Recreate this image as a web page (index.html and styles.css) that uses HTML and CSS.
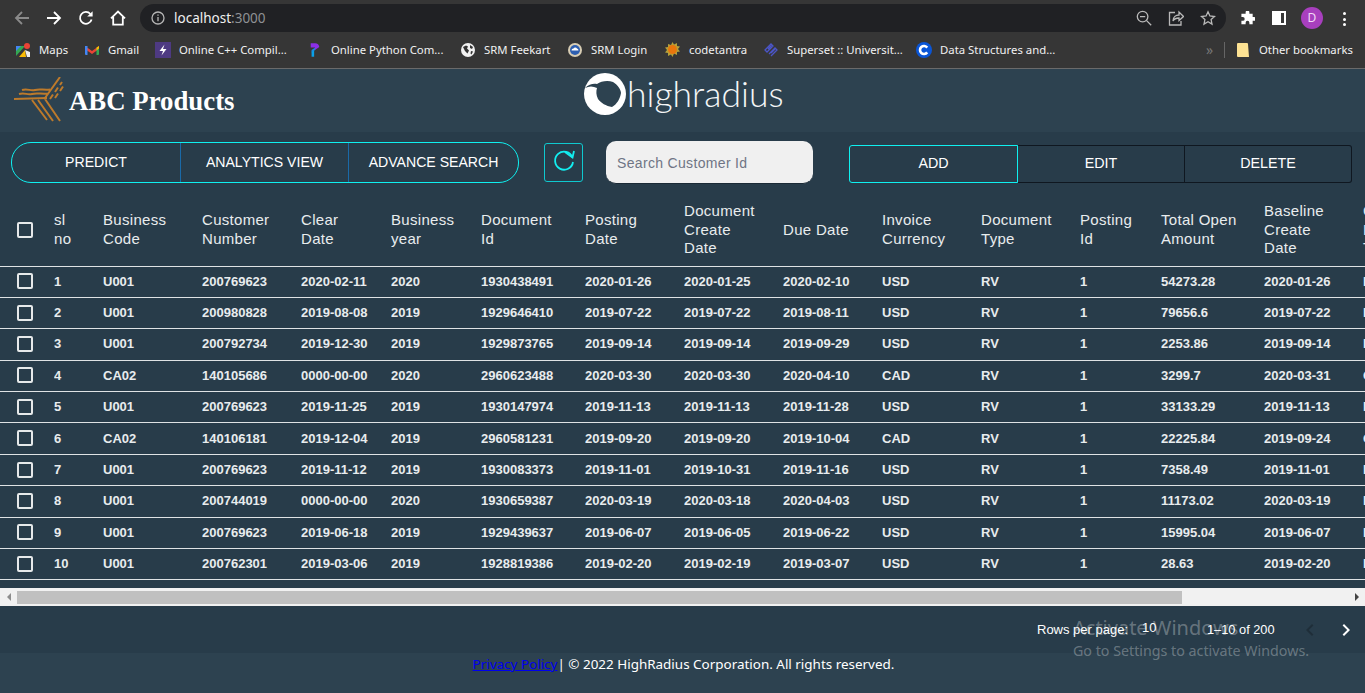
FILE: index.html
```html
<!DOCTYPE html>
<html lang="en">
<head>
<meta charset="utf-8">
<title>ABC Products</title>
<link rel="stylesheet" href="styles.css">
</head>
<body>
<div class="browser">
  <div class="nav-row">
    <svg class="nav-icon dim" viewBox="0 0 16 16"><path d="M15 8H2M8 2 2 8l6 6"/></svg>
    <svg class="nav-icon" viewBox="0 0 16 16"><path d="M1 8h13M8 2l6 6-6 6"/></svg>
    <svg class="nav-icon" viewBox="0 0 16 16"><path d="M13.6 9.5A5.9 5.9 0 1 1 12.4 4"/><path class="solid" d="M14.6 1.2v5.4H9.2z"/></svg>
    <svg class="nav-icon" viewBox="0 0 16 16"><path d="M1 8.4 8 1.6l7 6.8M3.2 7v7.6h9.6V7"/></svg>
    <div class="omnibox">
      <svg class="info" viewBox="0 0 14 14"><circle cx="7" cy="7" r="6"/><path d="M7 6v4.2M7 3.6v1.2"/></svg>
      <span class="url">localhost<span class="port">:3000</span></span>
      <svg class="omni-icon zoom-out" viewBox="0 0 16 16"><circle cx="6.6" cy="6.6" r="5.3"/><path d="M4 6.6h5.2M10.6 10.6l4.6 4.6"/></svg>
      <svg class="omni-icon" viewBox="0 0 16 16"><path d="M7 2.500H1.500V15h11.500v-4"/><path d="M5 11c0-4 3-6 6-6V2l4.500 4.500L11 10.500V8c-3 0-5 1-6 3z"/></svg>
      <svg class="omni-icon" viewBox="0 0 16 16"><path d="m8 1.800 1.900 4.200 4.600.5-3.400 3.100.9 4.500L8 11.800l-4 2.300.9-4.500L1.500 6.500l4.600-.5z"/></svg>
    </div>
    <svg class="ext" viewBox="0 0 16 16"><path d="M6 1.500a2 2 0 0 1 4 0V3h3.500v3.500H15a2 2 0 0 1 0 4h-1.500V14H10v-1.500a2 2 0 0 0-4 0V14H1.500v-3.500H3a2 2 0 0 0 0-4H1.500V3H6z"/></svg>
    <span class="sidepanel"></span>
    <span class="avatar">D</span>
    <span class="menu-dots"><i></i><i></i><i></i></span>
  </div>
  <div class="bookmarks">
    <a class="bm bm-maps"><svg viewBox="0 0 14 14"><path fill="#34a853" d="M0 3h9L0 13z"/><path fill="#fbbc04" d="M9 7 3 14h7z"/><path fill="#4285f4" d="M0 3h5L0 8z"/><path fill="#eee" d="M9 7 11 14h3V9z"/><circle cx="11" cy="3" r="3" fill="#ea4335"/></svg>Maps</a>
    <a class="bm bm-gmail"><svg viewBox="0 0 14 14"><path fill="#ea4335" d="M0 3l7 5 7-5v3L7 11 0 6z"/><path fill="#4285f4" d="M0 3h2.500v9H1a1 1 0 0 1-1-1z"/><path fill="#34a853" d="M11.500 5h2.500v6a1 1 0 0 1-1 1h-1.500z"/><path fill="#fbbc04" d="M11.500 4.500 14 3v2.500l-2.500 2z"/></svg>Gmail</a>
    <a class="bm bm-cpp"><svg viewBox="0 0 16 16"><rect width="16" height="16" fill="#4e3a82"/><path fill="#fff" d="M9.500 2.500 4.500 9H8l-1.500 4.500 5-6.500H8z"/></svg>Online C++ Compil...</a>
    <a class="bm bm-py"><svg viewBox="0 0 14 16"><path fill="#8b2fe8" d="M2 0h5a5 5 0 0 1 5 4.500L7 8V5H2z"/><path fill="#1e88e5" d="M3 8l4-2.500V8l-4 3z"/><path fill="#0aa0e8" d="M3 10l3-2v8H3z"/></svg>Online Python Com...</a>
    <a class="bm bm-feekart"><svg viewBox="0 0 14 14"><circle cx="7" cy="7" r="7" fill="#f1f1f1"/><path fill="#333" d="M2 4l3-1.500 2 1-1 2 2 2-1.500 3L4 8zM9 2l3 2-1 2-2-1zM10 8l2 .5-1.500 3-1-1z"/></svg>SRM Feekart</a>
    <a class="bm bm-login"><svg viewBox="0 0 14 14"><circle cx="7" cy="7" r="7" fill="#d8cdb4"/><circle cx="7" cy="7" r="5" fill="#2e5fb0"/><path fill="#fff" d="M3.500 7.500a2 2 0 0 1 2-2 2 2 0 0 1 3.500 0 2 2 0 0 1 1.500 2z"/></svg>SRM Login</a>
    <a class="bm bm-code"><svg viewBox="0 0 15 15"><path fill="#b5a13a" d="m7.500 0 1.500 2.500L12 1v3l3 .5-2 2.500 2 2.500-3 .5v3l-3-1.500L7.500 15 6 12.500 3 14v-3l-3-.5L2 8 0 5.500 3 5V2l3 1z"/><circle cx="7.500" cy="7.500" r="4.500" fill="#e9760c"/></svg>codetantra</a>
    <a class="bm bm-superset"><svg viewBox="0 0 15 15"><path fill="none" stroke="#4b55c8" stroke-width="1.300" d="M1 8l6-6 2 2-6 6zM5 12l6-6 2 2-6 6M4 7l4-4M7 11l4-4"/></svg>Superset :: Universit...</a>
    <a class="bm bm-ds"><svg viewBox="0 0 16 16"><circle cx="8" cy="8" r="8" fill="#0a55d6"/><path fill="none" stroke="#fff" stroke-width="2.600" d="M11.200 5.600a4 4 0 1 0 0 4.800"/></svg>Data Structures and...</a>
    <span class="bm-more">»</span>
    <span class="bm-sep"></span>
    <a class="bm bm-other"><svg viewBox="0 0 12 14"><path fill="#fde293" d="M0 1a1 1 0 0 1 1-1h9a1 1 0 0 1 1 1l1 13H1a1 1 0 0 1-1-1z"/></svg>Other bookmarks</a>
  </div>
</div>

<header class="app-header">
  <div class="brand">
    <svg class="brand-mark" viewBox="0 0 52 46"><path d="M0 22 33 21M8 13c6-2 8 1.500 13 0s9 .5 15-.5M5 17c6-2 8 1.500 13 0s10 .5 16-.5M18 23l15 20M24 23l15 21M31 22l15 22M31 21 46 0"/><path d="M36 22l3-4.500M41 15l3-4.500M46 8l2-3M41 21l3-4.500M46 14l3-4.500"/></svg>
    <h1 class="brand-name">ABC Products</h1>
  </div>
  <div class="hr-logo">
    <svg class="hr-mark" viewBox="0 0 42 42"><circle cx="21" cy="21" r="21" fill="#fff"/><path fill="#2d4250" d="M1 15C5 11 9 10.500 13 11 17 8 24 7 29 9 34 12 37 17 37 20 36 26 33 31 28 34 22 33 17 30 14 26 12 22 12 18 13 15 9 13 5 13 1 15z"/></svg>
    <span class="hr-name">highradius</span>
  </div>
</header>

<main class="workspace">
  <section class="toolbar">
    <div class="btn-group group-main">
      <button class="tool tool-predict">PREDICT</button>
      <button class="tool tool-analytics">ANALYTICS VIEW</button>
      <button class="tool tool-search">ADVANCE SEARCH</button>
    </div>
    <button class="refresh" aria-label="Refresh">
      <svg viewBox="0 0 24 24"><path d="M20.500 8.500A9 9 0 1 0 21 13"/><path d="M13 3 20.500 8.500 22 2"/></svg>
    </button>
    <input class="search" type="text" placeholder="Search Customer Id">
    <div class="btn-group group-crud">
      <button class="crud crud-add">ADD</button>
      <button class="crud crud-edit">EDIT</button>
      <button class="crud crud-delete">DELETE</button>
    </div>
  </section>

  <div class="table-clip">
    <table class="grid">
      <colgroup>
        <col class="c54"><col class="c49"><col class="c99"><col class="c99"><col class="c90"><col class="c90"><col class="c104"><col class="c99"><col class="c99"><col class="c99"><col class="c99"><col class="c99"><col class="c81"><col class="c103"><col class="c99"><col class="c99">
      </colgroup>
      <thead>
        <tr>
          <th><span class="check check-head"></span></th>
          <th>sl<br>no</th><th>Business<br>Code</th><th>Customer<br>Number</th><th>Clear<br>Date</th><th>Business<br>year</th><th>Document<br>Id</th><th>Posting<br>Date</th><th>Document<br>Create<br>Date</th><th>Due Date</th><th>Invoice<br>Currency</th><th>Document<br>Type</th><th>Posting<br>Id</th><th>Total Open<br>Amount</th><th>Baseline<br>Create<br>Date</th><th>Customer<br>Payment<br>Terms</th>
        </tr>
      </thead>
      <tbody>
        <tr><td><span class="check"></span></td><td>1</td><td>U001</td><td>200769623</td><td>2020-02-11</td><td>2020</td><td>1930438491</td><td>2020-01-26</td><td>2020-01-25</td><td>2020-02-10</td><td>USD</td><td>RV</td><td>1</td><td>54273.28</td><td>2020-01-26</td><td>NAH4</td></tr>
        <tr><td><span class="check"></span></td><td>2</td><td>U001</td><td>200980828</td><td>2019-08-08</td><td>2019</td><td>1929646410</td><td>2019-07-22</td><td>2019-07-22</td><td>2019-08-11</td><td>USD</td><td>RV</td><td>1</td><td>79656.6</td><td>2019-07-22</td><td>NAD1</td></tr>
        <tr><td><span class="check"></span></td><td>3</td><td>U001</td><td>200792734</td><td>2019-12-30</td><td>2019</td><td>1929873765</td><td>2019-09-14</td><td>2019-09-14</td><td>2019-09-29</td><td>USD</td><td>RV</td><td>1</td><td>2253.86</td><td>2019-09-14</td><td>NAA8</td></tr>
        <tr><td><span class="check"></span></td><td>4</td><td>CA02</td><td>140105686</td><td>0000-00-00</td><td>2020</td><td>2960623488</td><td>2020-03-30</td><td>2020-03-30</td><td>2020-04-10</td><td>CAD</td><td>RV</td><td>1</td><td>3299.7</td><td>2020-03-31</td><td>CA10</td></tr>
        <tr><td><span class="check"></span></td><td>5</td><td>U001</td><td>200769623</td><td>2019-11-25</td><td>2019</td><td>1930147974</td><td>2019-11-13</td><td>2019-11-13</td><td>2019-11-28</td><td>USD</td><td>RV</td><td>1</td><td>33133.29</td><td>2019-11-13</td><td>NAH4</td></tr>
        <tr><td><span class="check"></span></td><td>6</td><td>CA02</td><td>140106181</td><td>2019-12-04</td><td>2019</td><td>2960581231</td><td>2019-09-20</td><td>2019-09-20</td><td>2019-10-04</td><td>CAD</td><td>RV</td><td>1</td><td>22225.84</td><td>2019-09-24</td><td>CA10</td></tr>
        <tr><td><span class="check"></span></td><td>7</td><td>U001</td><td>200769623</td><td>2019-11-12</td><td>2019</td><td>1930083373</td><td>2019-11-01</td><td>2019-10-31</td><td>2019-11-16</td><td>USD</td><td>RV</td><td>1</td><td>7358.49</td><td>2019-11-01</td><td>NAH4</td></tr>
        <tr><td><span class="check"></span></td><td>8</td><td>U001</td><td>200744019</td><td>0000-00-00</td><td>2020</td><td>1930659387</td><td>2020-03-19</td><td>2020-03-18</td><td>2020-04-03</td><td>USD</td><td>RV</td><td>1</td><td>11173.02</td><td>2020-03-19</td><td>NAA8</td></tr>
        <tr><td><span class="check"></span></td><td>9</td><td>U001</td><td>200769623</td><td>2019-06-18</td><td>2019</td><td>1929439637</td><td>2019-06-07</td><td>2019-06-05</td><td>2019-06-22</td><td>USD</td><td>RV</td><td>1</td><td>15995.04</td><td>2019-06-07</td><td>NAH4</td></tr>
        <tr><td><span class="check"></span></td><td>10</td><td>U001</td><td>200762301</td><td>2019-03-06</td><td>2019</td><td>1928819386</td><td>2019-02-20</td><td>2019-02-19</td><td>2019-03-07</td><td>USD</td><td>RV</td><td>1</td><td>28.63</td><td>2019-02-20</td><td>NAD1</td></tr>
      </tbody>
    </table>
  </div>

  <div class="hscroll">
    <span class="arrow arrow-left"></span>
    <div class="track"><div class="thumb"></div></div>
    <span class="arrow arrow-right"></span>
  </div>

  <div class="pagination">
    <span class="rows-label">Rows per page:</span>
    <span class="rows-value">10</span>
    <span class="range">1–10 of 200</span>
    <svg class="pager dim-pager" viewBox="0 0 24 24"><path d="M15.400 7.400 14 6l-6 6 6 6 1.400-1.400L10.800 12z"/></svg>
    <svg class="pager" viewBox="0 0 24 24"><path d="M10 6 8.600 7.400 13.200 12l-4.600 4.600L10 18l6-6z"/></svg>
  </div>
</main>

<footer class="footer"><a class="policy" href="#">Privacy Policy</a><span class="copy">| © 2022 HighRadius Corporation. All rights reserved.</span></footer>

<div class="activate">
  <div class="activate-title">Activate Windows</div>
  <div class="activate-sub">Go to Settings to activate Windows.</div>
</div>
</body>
</html>
```

FILE: styles.css
```css
* { box-sizing: border-box; }
html, body { margin: 0; height: 693px; overflow: hidden; }
body { background: #2d4250; color: #fff; font-family: "Liberation Sans", Arial, sans-serif; position: relative; }

/* browser chrome */
.browser { height: 69px; background: #363636; border-bottom: 1px solid #6a6a6a; font-family: "Noto Sans", sans-serif; }
.nav-row { height: 34px; padding: 4px 0 0 14px; display: flex; align-items: flex-start; }
.nav-icon { width: 16px; height: 16px; margin: 6px 16px 0 0; fill: none; stroke: #fff; stroke-width: 1.8; flex: none; }
.nav-icon.dim { stroke: #8a8a8a; }
.nav-icon .solid { fill: #fff; stroke: none; }
.omnibox { width: 1086px; height: 28px; margin-left: -2px; border-radius: 14px; background: #202124; display: flex; align-items: center; padding: 0 10px 0 11px; }
.info { width: 14px; height: 14px; fill: none; stroke: #b5b5b5; stroke-width: 1.3; flex: none; }
.url { margin-left: 9px; font-size: 13.500px; color: #f0f0f0; flex: 1; }
.port { color: #8f9195; }
.omni-icon { width: 16px; height: 16px; margin-left: 16px; fill: none; stroke: #b9b9b9; stroke-width: 1.300; flex: none; }
.ext { width: 15px; height: 15px; margin: 7px 0 0 14px; fill: #fff; flex: none; }
.sidepanel { width: 14px; height: 14px; margin: 7px 0 0 17px; border: 2px solid #fff; border-left-width: 9px; background: #363636; flex: none; }
.avatar { width: 22px; height: 22px; margin: 3px 0 0 15px; border-radius: 50%; background: #a83fbe; color: #f3d9f7; font-size: 12px; line-height: 22px; text-align: center; flex: none; }
.menu-dots { margin: 8px 0 0 20px; display: flex; flex-direction: column; gap: 2.500px; flex: none; }
.menu-dots i { width: 3px; height: 3px; border-radius: 50%; background: #fff; }
.bookmarks { height: 34px; padding: 0 0 3px 16px; display: flex; align-items: center; font-size: 11.350px; color: #f1f1f1; }
.bm { display: flex; align-items: center; gap: 9px; white-space: nowrap; flex: none; }
.bm svg { flex: none; width: 14px; height: 14px; }
.bm-maps { width: 69px; }
.bm-gmail { width: 70px; }
.bm-cpp { width: 154px; gap: 8px; }
.bm-py { width: 152px; gap: 10px; }
.bm-feekart { width: 107px; }
.bm-login { width: 97px; }
.bm-code { width: 99px; }
.bm-superset { width: 152px; gap: 8px; }
.bm-ds { width: 290px; gap: 8px; }
.bm-cpp svg, .bm-ds svg { width: 16px; height: 16px; }
.bm-code svg, .bm-superset svg { width: 15px; height: 15px; }
.bm-py svg { width: 12px; height: 16px; }
.bm-more { width: 18px; color: #777; font-size: 14px; flex: none; }
.bm-sep { width: 1px; height: 16px; background: #666; margin-right: 12px; flex: none; }
.bm-other { gap: 10px; }
.bm-other svg { width: 12px; }

/* app header */
.app-header { height: 63px; display: flex; align-items: flex-start; }
.brand { width: 584px; padding-left: 14px; display: flex; align-items: flex-start; flex: none; }
.brand-mark { width: 52px; height: 46px; margin-top: 8px; fill: none; stroke: #bd7a2b; stroke-width: 2; flex: none; overflow: hidden; }
.brand-name { margin: 16px 0 0 3px; font: bold 26.800px/32px "Liberation Serif", "Times New Roman", serif; }
.hr-logo { display: flex; align-items: flex-start; }
.hr-mark { width: 42px; height: 42px; margin-top: 4px; flex: none; }
.hr-name { margin: 5px 0 0 1px; font: 300 35.500px/40px Lato, sans-serif; color: #f4f6f7; }

/* workspace */
.workspace { background: #283c4a; height: 521px; }
.toolbar { height: 63px; padding: 0 13px 2px 11px; display: flex; align-items: center; background: #283c4a; }
button { font-family: inherit; color: #fff; background: transparent; cursor: pointer; padding: 0 0 2px; }
.btn-group { display: flex; flex: none; }
.group-main { width: 508px; height: 41px; border: 1px solid #0ff0f0; border-radius: 20px; }
.tool { height: 100%; border: 0; border-right: 1px solid #1a6aa8; font-size: 14.100px; }
.tool-predict { width: 169px; }
.tool-analytics { width: 168px; }
.tool-search { flex: 1; border-right: 0; }
.refresh { width: 39px; height: 39px; margin-left: 25px; border: 1px solid #0fc9cf; border-radius: 3px; flex: none; display: flex; align-items: center; justify-content: center; padding: 0 0 3px; }
.refresh svg { width: 24px; height: 24px; fill: none; stroke: #12eef0; stroke-width: 1.800; }
.search { width: 207px; height: 43px; margin-left: 23px; padding: 1px 11px 0; border: 0; border-bottom: 1px solid #1b2a36; border-radius: 10px; background: #f0f0f0; font: 14px "Liberation Sans", Arial, sans-serif; letter-spacing: .33px; flex: none; }
.search::placeholder { color: #6f7585; opacity: 1; }
.group-crud { width: 503px; height: 38px; margin: 3px 0 0 36px; }
.crud { flex: 1; height: 100%; border: 1px solid #0f1720; border-left-width: 0; font-size: 14.300px; }
.crud-add { flex: none; width: 169px; border: 1px solid #0ff0f0; border-radius: 3px 0 0 3px; }
.crud-delete { border-radius: 0 3px 3px 0; }

/* table */
.table-clip { height: 393px; overflow: hidden; }
.grid { width: 1462px; table-layout: fixed; border-collapse: collapse; color: #e8ecee; }
.c54 { width: 54px; } .c49 { width: 49px; } .c81 { width: 81px; } .c90 { width: 90px; } .c99 { width: 99px; } .c103 { width: 103px; } .c104 { width: 104px; }
.grid th { height: 71px; padding: 0 0 1px; font-size: 15px; line-height: 18.300px; letter-spacing: .3px; font-weight: 400; text-align: left; vertical-align: middle; border-bottom: 1px solid #dfe3e5; }
.grid td { height: 31.400px; padding: 0 0 1px; font-size: 13px; font-weight: 700; white-space: nowrap; overflow: hidden; border-bottom: 1px solid #dfe3e5; }
.grid th:first-child, .grid td:first-child { padding-left: 17px; }
.check { display: block; width: 16px; height: 16px; border: 2px solid #e6e9ea; border-radius: 2px; }

/* scrollbar */
.hscroll { height: 18px; background: #f1f1f1; display: flex; align-items: center; }
.arrow { width: 17px; display: flex; justify-content: center; flex: none; }
.arrow::before { content: ""; border: 4px solid transparent; }
.arrow-left::before { border-right-color: #8d8d8d; border-left-width: 0; }
.arrow-right::before { border-left-color: #444; border-right-width: 0; }
.track { flex: 1; height: 13px; }
.thumb { width: 1165px; height: 100%; background: #c0c0c0; }

/* pagination */
.pagination { height: 47px; display: flex; align-items: center; padding-left: 1037px; font-size: 13px; color: #fff; }
.rows-label { width: 105px; flex: none; }
.rows-value { width: 65px; margin-top: -4px; flex: none; }
.range { width: 91px; flex: none; font-size: 12.800px; }
.pager { width: 24px; height: 24px; fill: #fff; flex: none; margin-right: 12px; }
.dim-pager { fill: #1f2e39; }

/* footer */
.footer { height: 40px; display: flex; justify-content: center; align-items: center; padding: 0 0 18px 2px; font: 13.450px "Noto Sans", sans-serif; }
.policy { color: #0000ee; text-decoration: underline; }

/* watermark */
.activate { position: absolute; left: 1073px; top: 615px; color: rgba(255,255,255,.3); font-family: "Noto Sans", sans-serif; white-space: nowrap; }
.activate-title { font-size: 20px; line-height: 26px; }
.activate-sub { font-size: 14.250px; line-height: 20px; }
```
